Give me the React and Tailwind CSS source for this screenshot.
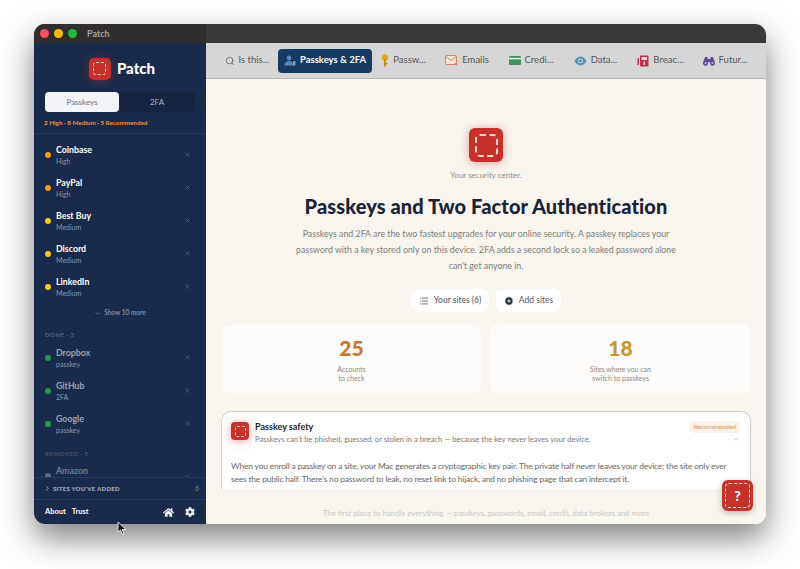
import { X, Check, ChevronDown, ChevronUp, ChevronRight, Search, List, CirclePlus } from "lucide-react";
import { FaHome, FaCog } from "react-icons/fa";

const font = { nunito: "font-['Lato','Noto_Sans',sans-serif]" };

const PatchIcon = ({ box = "w-[22px] h-[22px] rounded-[5px]", inner = "w-[13px] h-[13px] rounded-[3px]", dash = "border" }) => (
  <div className={`${box} bg-[#c8302a] flex items-center justify-center shadow-[0_1px_10px_rgba(200,48,42,0.45)] shrink-0`}>
    <div className={`${inner} ${dash} border-dashed border-[#f6d5d0]`} />
  </div>
);

const open = [
  { name: "Coinbase", sub: "High", dot: "bg-[#f59e1b]" },
  { name: "PayPal", sub: "High", dot: "bg-[#f59e1b]" },
  { name: "Best Buy", sub: "Medium", dot: "bg-[#fbc91a]" },
  { name: "Discord", sub: "Medium", dot: "bg-[#fbc91a]" },
  { name: "LinkedIn", sub: "Medium", dot: "bg-[#fbc91a]" },
];

const done = [
  { name: "Dropbox", sub: "passkey" },
  { name: "GitHub", sub: "2FA" },
  { name: "Google", sub: "passkey" },
];

const SiteRow = ({ name, sub, dot, nameColor = "text-white", removed }) => (
  <div className="h-[33px] flex items-center pl-[11px] pr-[15px]">
    <span className={`w-[6px] h-[6px] rounded-full ${dot} mr-[5px] shrink-0`} />
    <div className="flex-1 min-w-0">
      <div className={`text-[8.8px] leading-[12px] font-bold ${nameColor}`}>{name}</div>
      <div className="h-[10px] text-[7px] leading-[10px] text-[#8d98ac]">{sub}</div>
    </div>
    {removed ? (
      <Check size={7} strokeWidth={1.5} className="text-[#7c879c]" />
    ) : (
      <X size={7} strokeWidth={1.5} className="text-[#7c879c]" />
    )}
  </div>
);

const MailIcon = () => (
  <svg width="13" height="11" viewBox="0 0 13 11" className="shrink-0">
    <rect x="0.5" y="0.5" width="11" height="9" rx="1" fill="#f5e6dc" stroke="#d9825f" />
    <path d="M1 1.5 6 5.5 11 1.5" fill="none" stroke="#d9825f" />
    <circle cx="11" cy="9" r="1.5" fill="#d9825f" />
  </svg>
);
const KeyIcon = () => (
  <svg width="8" height="13" viewBox="0 0 8 13" className="shrink-0">
    <circle cx="4" cy="3.5" r="3.2" fill="#e0a526" />
    <rect x="3" y="5" width="2" height="7.5" fill="#c98d17" />
    <rect x="4.5" y="9" width="2" height="1.3" fill="#c98d17" />
  </svg>
);
const PersonIcon = () => (
  <svg width="12" height="11" viewBox="0 0 12 11" className="shrink-0">
    <circle cx="5" cy="3" r="2.4" fill="#5f84b8" />
    <path d="M0.5 10.5C0.5 7.5 2.5 6 5 6s4.5 1.5 4.5 4.5z" fill="#5f84b8" />
    <rect x="9" y="6" width="2.5" height="4.5" fill="#7f9bc4" />
  </svg>
);
const CardIcon = () => (
  <svg width="12" height="9" viewBox="0 0 12 9" className="shrink-0">
    <rect width="12" height="9" rx="1" fill="#3f8f5b" />
    <rect y="1.8" width="12" height="1.6" fill="#dfeee4" />
  </svg>
);
const EyeIcon = () => (
  <svg width="13" height="10" viewBox="0 0 13 10" className="shrink-0">
    <path d="M0.5 5C2.5 1.5 4.5.5 6.5.5s4 1 6 4.5c-2 3.5-4 4.5-6 4.5S2.5 8.5.5 5z" fill="#5c93b8" />
    <circle cx="6.5" cy="5" r="2.3" fill="#dce6ec" />
    <circle cx="6.5" cy="5" r="1.2" fill="#44708f" />
  </svg>
);
const BreachIcon = () => (
  <svg width="12" height="12" viewBox="0 0 12 12" className="shrink-0">
    <rect x="3" y="0.5" width="8.5" height="11" rx="1" fill="#b8324f" />
    <rect x="4.5" y="2" width="5.5" height="3" fill="#f0c9d2" />
    <rect x="0.5" y="3" width="1.5" height="7" fill="#b8324f" />
    <rect x="6.5" y="6.5" width="1.5" height="3.5" fill="#f0c9d2" />
  </svg>
);
const BinocularIcon = () => (
  <svg width="12" height="10" viewBox="0 0 12 10" className="shrink-0">
    <path d="M2 1h2.5v2H7.5V1H10l2 6a2.5 2.5 0 0 1-5 .5V6H5v1.5a2.5 2.5 0 0 1-5-.5z" fill="#5b4a94" />
    <circle cx="2.6" cy="7" r="1.1" fill="#c4b8e4" />
    <circle cx="9.4" cy="7" r="1.1" fill="#c4b8e4" />
  </svg>
);

const tabs = [
  { label: "Is this...", icon: <Search size={10} strokeWidth={2} className="text-[#666] shrink-0" />, w: "w-[62px]" },
  { label: "Passkeys & 2FA", icon: <PersonIcon />, w: "w-[94px]", active: true },
  { label: "Passw...", icon: <KeyIcon />, w: "w-[63px]" },
  { label: "Emails", icon: <MailIcon />, w: "w-[64px]" },
  { label: "Credi...", icon: <CardIcon />, w: "w-[64px]" },
  { label: "Data...", icon: <EyeIcon />, w: "w-[65px]" },
  { label: "Breac...", icon: <BreachIcon />, w: "w-[65px]" },
  { label: "Futur...", icon: <BinocularIcon />, w: "w-[64px]" },
];

export default function App() {
  return (
    <div className={`relative w-[800px] h-[569px] bg-white pt-[24px] px-[34px] overflow-hidden ${font.nunito}`}>
      <div className="w-[732px] h-[500px] rounded-[11px] overflow-hidden flex flex-col shadow-[0_14px_32px_rgba(0,0,0,0.5)]">
        {/* title bar */}
        <div className="h-[19px] flex shrink-0 bg-[#3a3937]">
          <div className="w-[172px] bg-[#2f2d2d] flex items-center pl-[6px] gap-[5px]">
            <span className="w-[9px] h-[9px] rounded-full bg-[#f0525a]" />
            <span className="w-[9px] h-[9px] rounded-full bg-[#fbbc09]" />
            <span className="w-[9px] h-[9px] rounded-full bg-[#27b83f]" />
            <span className="ml-[5px] text-[9px] font-bold text-[#a3a3a3]">Patch</span>
          </div>
        </div>

        <div className="flex-1 flex min-h-0">
          {/* sidebar */}
          <aside className="w-[172px] bg-[#1a2a4a] flex flex-col shrink-0">
            <div className="h-[49px] flex items-center justify-center gap-[6px] pt-[2px] pl-[4px] shrink-0">
              <PatchIcon />
              <span className="text-[15px] font-black text-white">Patch</span>
            </div>
            <div className="mx-[11px] h-[20px] flex rounded-[5px] bg-[#17243f] shrink-0">
              <div className="w-[74px] rounded-[4px] bg-[#f2f4f7] flex items-center justify-center text-[8px] text-[#667085]">Passkeys</div>
              <div className="flex-1 flex items-center justify-center text-[8px] text-[#a9b3c4]">2FA</div>
            </div>
            <div className="mt-[6px] pl-[10px] h-[10px] text-[6.3px] leading-[10px] font-bold text-[#f0913a] shrink-0">2 High · 8 Medium · 5 Recommended</div>
            <div className="mt-[5px] border-t border-[#2a3a5a] shrink-0" />

            <div className="flex-1 min-h-0 overflow-hidden pt-[4px]">
              {open.map((s) => (
                <SiteRow key={s.name} {...s} />
              ))}
              <div className="mt-[2px] h-[16px] flex items-center justify-center gap-[3px] text-[6.5px] text-[#7f8ba0] font-bold">
                <ChevronDown size={7} />
                Show 10 more
              </div>
              <div className="mt-[9px] pl-[11px] h-[10px] text-[6px] leading-[10px] font-bold tracking-[0.5px] text-[#566480]">DONE · 3</div>
              <div className="mt-[1px]">
                {done.map((s) => (
                  <SiteRow key={s.name} {...s} dot="bg-[#1f9d4d]" nameColor="text-[#9aa5b8]" />
                ))}
              </div>
              <div className="mt-[9px] pl-[11px] h-[10px] text-[6px] leading-[10px] font-bold tracking-[0.5px] text-[#45536f]">REMOVED · 5</div>
              <SiteRow name="Amazon" dot="bg-[#5c6880]" nameColor="text-[#6f7b90]" removed />
            </div>

            <div className="h-[22px] border-t border-[#2a3a5a] flex items-center pl-[10px] pr-[7px] shrink-0">
              <ChevronRight size={7} strokeWidth={3} className="text-[#9ca8bc]" />
              <span className="ml-[2px] flex-1 text-[6px] font-extrabold tracking-[0.3px] text-[#9ca8bc]">SITES YOU'VE ADDED</span>
              <span className="text-[7px] text-[#7c879c]">6</span>
            </div>
            <div className="h-[25px] border-t border-[#2a3a5a] flex items-center pl-[11px] pr-[11px] gap-[6px] shrink-0">
              <span className="text-[7.5px] font-bold text-white">About</span>
              <span className="text-[7.5px] font-bold text-white">Trust</span>
              <FaHome size={11} className="ml-auto text-white" />
              <FaCog size={10} className="ml-[5px] text-white" />
            </div>
          </aside>

          {/* main column */}
          <main className="relative flex-1 min-w-0 flex flex-col bg-[#f9f6f0]">
            <nav className="h-[36px] bg-[#d6d6d6] border-b border-[#b5b5b5] flex items-center pl-[10px] shrink-0">
              {tabs.map((t) => (
                <div
                  key={t.label}
                  className={`${t.w} h-[24px] flex items-center justify-center gap-[4px] rounded-[4px] text-[9.5px] whitespace-nowrap ${
                    t.active ? "bg-[#173a63] text-white font-bold" : "text-[#555]"
                  }`}
                >
                  {t.icon}
                  {t.label}
                </div>
              ))}
            </nav>

            <div className="flex-1 min-h-0 overflow-hidden flex flex-col items-center pt-[49px] px-[15px]">
              <PatchIcon box="w-[34px] h-[34px] rounded-[6px]" inner="w-[23px] h-[23px] rounded-[5px]" dash="border-2" />
              <div className="mt-[8px] text-[8px] leading-[10px] text-[#8a8a85]">Your security center.</div>
              <h1 className="mt-[13px] text-[20px] leading-[26px] font-black tracking-[0.1px] text-[#1a2238]">Passkeys and Two Factor Authentication</h1>
              <p className="mt-[7px] w-[395px] text-center text-[8.8px] leading-[16px] text-[#7b7b76]">
                Passkeys and 2FA are the two fastest upgrades for your online security. A passkey replaces your password with a key stored only on this device. 2FA adds a second lock so a leaked password alone can't get anyone in.
              </p>
              <div className="mt-[15px] flex gap-[7px] shrink-0">
                <div className="w-[78px] h-[23px] rounded-[8px] bg-white flex items-center justify-center gap-[5px] text-[8.5px] text-[#555]">
                  <List size={10} />
                  Your sites (6)
                </div>
                <div className="w-[65px] h-[23px] rounded-[8px] bg-white flex items-center justify-center gap-[5px] text-[8.5px] text-[#555]">
                  <CirclePlus size={10} fill="#1a2238" stroke="white" strokeWidth={2} />
                  Add sites
                </div>
              </div>
              <div className="mt-[13px] w-full flex gap-[9px] shrink-0 pl-[1px]">
                <div className="w-[259px] h-[68px] rounded-[8px] bg-[#fdfcfa] flex flex-col items-center pt-[12px]">
                  <div className="text-[21px] leading-[22px] font-black text-[#c9762f]">25</div>
                  <div className="mt-[6px] text-[7px] leading-[9px] text-center text-[#8a8a85]">Accounts<br />to check</div>
                </div>
                <div className="flex-1 h-[68px] rounded-[8px] bg-[#fdfcfa] flex flex-col items-center pt-[12px]">
                  <div className="text-[21px] leading-[22px] font-black text-[#c8962b]">18</div>
                  <div className="mt-[6px] text-[7px] leading-[9px] text-center text-[#8a8a85]">Sites where you can<br />switch to passkeys</div>
                </div>
              </div>
              <div className="mt-[18px] w-full rounded-t-[10px] bg-white border border-b-0 border-[#cfcfcb] shrink-0 h-[100px] px-[9px] pt-[9px]">
                <div className="flex gap-[6px]">
                  <PatchIcon box="w-[18px] h-[18px] rounded-[4px] mt-[1px]" inner="w-[11px] h-[11px] rounded-[2px]" />
                  <div className="flex-1 min-w-0">
                    <div className="flex items-start justify-between">
                      <span className="text-[9px] leading-[12px] font-bold text-[#222]">Passkey safety</span>
                      <span className="px-[5px] h-[12px] rounded-full bg-[#fbf1e4] text-[6.5px] leading-[12px] text-[#d39a5a]">Recommended</span>
                    </div>
                    <div className="flex items-center justify-between pr-[1px]">
                      <span className="text-[7.6px] leading-[12px] text-[#777]">Passkeys can't be phished, guessed, or stolen in a breach — because the key never leaves your device.</span>
                      <ChevronUp size={8} className="text-[#aaa]" />
                    </div>
                  </div>
                </div>
                <p className="mt-[15px] text-[8.4px] leading-[13px] tracking-[-0.15px] text-[#666]">
                  When you enroll a passkey on a site, your Mac generates a cryptographic key pair. The private half never leaves your device; the site only ever sees the public half. There's no password to leak, no reset link to hijack, and no phishing page that can intercept it.
                </p>
              </div>
            </div>

            <div className="absolute left-0 right-0 bottom-0 h-[35px] bg-[#f9f6f0] flex items-end justify-center pb-[6px] text-[7.8px] leading-[10px] text-[#c9c7c0]">
              The first place to handle everything — passkeys, passwords, email, credit, data brokers and more
            </div>
            {/* help button */}
            <div className="absolute right-[13px] bottom-[13px] w-[31px] h-[31px] rounded-[6px] bg-[#c8302a] p-[3px] shadow-[0_2px_6px_rgba(0,0,0,0.25)]">
              <div className="w-full h-full rounded-[4px] border border-dashed border-white flex items-center justify-center text-[14px] font-black text-white">?</div>
            </div>
          </main>
        </div>
      </div>

      {/* mouse pointer */}
      <svg className="absolute left-[117px] top-[521px]" width="10" height="14" viewBox="0 0 10 14">
        <path d="M1 1v10l2.5-2 1.8 4 1.6-.7-1.800-3.800H9z" fill="#111" stroke="#fff" strokeWidth="0.8" />
      </svg>
    </div>
  );
}
